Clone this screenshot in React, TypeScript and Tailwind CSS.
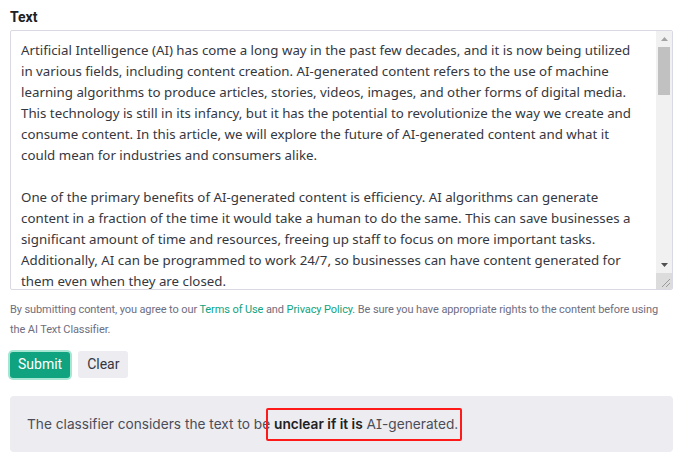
const lines = [
  'Artificial Intelligence (AI) has come a long way in the past few decades, and it is now being utilized',
  'in various fields, including content creation. AI-generated content refers to the use of machine',
  'learning algorithms to produce articles, stories, videos, images, and other forms of digital media.',
  'This technology is still in its infancy, but it has the potential to revolutionize the way we create and',
  'consume content. In this article, we will explore the future of AI-generated content and what it',
  'could mean for industries and consumers alike.',
  '',
  'One of the primary benefits of AI-generated content is efficiency. AI algorithms can generate',
  'content in a fraction of the time it would take a human to do the same. This can save businesses a',
  'significant amount of time and resources, freeing up staff to focus on more important tasks.',
  'Additionally, AI can be programmed to work 24/7, so businesses can have content generated for',
  'them even when they are closed.',
];

function Scrollbar() {
  return (
    <div className="flex w-4 shrink-0 flex-col bg-[#f1f1f1]">
      <div className="flex h-4 items-center justify-center">
        <svg width="7" height="4" viewBox="0 0 7 4">
          <path d="M0 4 L3.5 0 L7 4 Z" fill="#a3a3a3" />
        </svg>
      </div>
      <div className="mx-[2px] h-[48px] bg-[#c1c1c1]" />
      <div className="flex-1" />
      <div className="flex h-4 items-center justify-center">
        <svg width="7" height="4" viewBox="0 0 7 4">
          <path d="M0 0 L7 0 L3.5 4 Z" fill="#505050" />
        </svg>
      </div>
      <div className="flex h-4 items-end justify-end bg-[#dcdcdc] p-[2px]">
        <svg width="10" height="10" viewBox="0 0 10 10">
          <path d="M10 2 L2 10 M10 6 L6 10" stroke="#9a9a9a" strokeWidth="1" />
        </svg>
      </div>
    </div>
  );
}

export default function App() {
  return (
    <div className="w-[700px] bg-white px-[10px] pt-[7px] font-['Inter',sans-serif]">
      <div className="w-[663px]">
        <label className="block font-['Roboto',sans-serif] text-[14px] font-bold leading-[20px] text-[#202123]">
          Text
        </label>

        <div className="mt-[3px] flex h-[260px] overflow-hidden rounded-[2px] border border-[#d9d9e3]">
          <div className="flex-1 overflow-hidden px-[10px] pt-[9px] font-['Noto_Sans',sans-serif] text-[13.3px] leading-[21px] text-[#353740]">
            {lines.map((l, i) => (
              <div key={i} className="h-[21px] whitespace-nowrap">
                {l}
              </div>
            ))}
          </div>
          <Scrollbar />
        </div>

        <p className="mt-[10px] font-['Roboto',sans-serif] text-[11px] leading-[20px] tracking-[-0.1px] text-[#6e6e80]">
          By submitting content, you agree to our{' '}
          <a className="text-[#10a37f]">Terms of Use</a> and{' '}
          <a className="text-[#10a37f]">Privacy Policy</a>. Be sure you have appropriate rights to the content before using
          the AI Text Classifier.
        </p>

        <div className="mt-[11px] flex items-center gap-[8px]">
          <button
            type="button"
            className="h-[26px] rounded-[3px] bg-[#10a37f] px-[8px] font-['Roboto',sans-serif] text-[14px] text-white ring-2 ring-[#a8e6d4]"
          >
            Submit
          </button>
          <button
            type="button"
            className="h-[27px] rounded-[3px] bg-[#ececf1] px-[9px] font-['Roboto',sans-serif] text-[14px] text-[#353740]"
          >
            Clear
          </button>
        </div>

        <div className="mt-[18px] flex h-[56px] items-center rounded-[4px] bg-[#ececf1] px-[17px] text-[13.7px] text-[#4b4c58] [font-feature-settings:'cv08']">
          <span>
            The classifier considers the text to be{' '}
            <span className="relative">
              <span className="font-semibold text-[#202123]">unclear if it is</span> AI-generated.
              <span className="absolute -bottom-[9px] -left-[8px] -right-[4px] -top-[8px] rounded-[2px] border-2 border-[#ff1a1a]" />
            </span>
          </span>
        </div>
      </div>
    </div>
  );
}
